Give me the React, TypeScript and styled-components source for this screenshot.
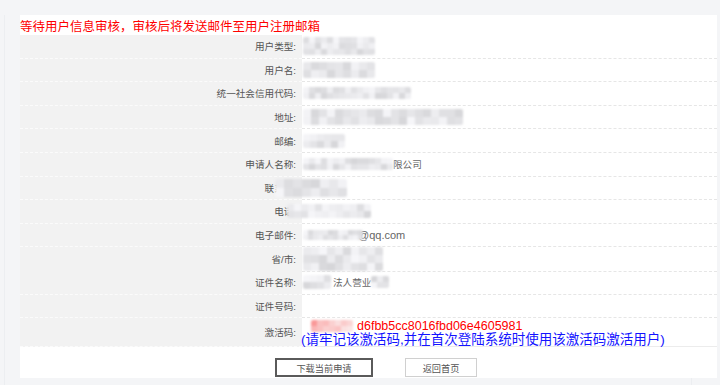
import React from 'react'
import styled, { createGlobalStyle } from 'styled-components'

const GlobalStyle = createGlobalStyle`
	html, body {
		margin: 0;
		padding: 0;
		background: #f4f5f7;
		font-family: "Liberation Sans", "Noto Sans CJK SC", sans-serif;
		overflow: hidden;
	}
`

const Page = styled.div`
	width: 720px;
	height: 385px;
	box-sizing: border-box;
	padding: 15px 0 0 4px;
	background: #f4f5f7;
`

// faint frame lines behind the panel (left edge and the one near the right)
const Frame = styled.div`
	width: 688px;
	height: 370px;
	box-sizing: border-box;
	border-left: 1px solid #eceef1;
	border-right: 1px solid #eceef1;
	padding-left: 15px;
`

const Panel = styled.div`
	width: 697px;
	height: 363px;
	background: #fff;
	display: flex;
	flex-direction: column;
`

const Notice = styled.div`
	height: 20px;
	display: flex;
	align-items: center;
	font-size: 12.5px;
	color: #ff0000;
	white-space: nowrap;
`

const Row = styled.div<{ $h?: number }>`
	display: grid;
	grid-template-columns: 282px 1fr;
	height: ${({ $h }) => $h ?? 23.6}px;
`

const Label = styled.div`
	box-sizing: border-box;
	background: #f2f2f2;
	border-bottom: 1px dashed #fbfbfb;
	display: flex;
	align-items: center;
	justify-content: flex-end;
	padding-right: 6px;
	font-size: 9.6px;
	color: #555;
	white-space: nowrap;
`

const Value = styled.div<{ $stack?: boolean; $last?: boolean }>`
	box-sizing: border-box;
	border-bottom: 1px ${({ $last }) => ($last ? 'solid #ececec' : 'dashed #e6e6e6')};
	display: flex;
	flex-direction: ${({ $stack }) => ($stack ? 'column' : 'row')};
	align-items: ${({ $stack }) => ($stack ? 'flex-start' : 'center')};
	padding-left: 1px;
	padding-top: ${({ $stack }) => ($stack ? 2 : 0)}px;
	font-size: 11px;
	color: #666;
	white-space: nowrap;
`

const Plain = styled.span<{ $size?: number; $shift?: number }>`
	font-size: ${({ $size }) => $size ?? 11}px;
	color: #666;
	margin-left: ${({ $shift }) => $shift ?? 0}px;
`

const Code = styled.div`
	display: flex;
	align-items: center;
	height: 12px;
	font-size: 12.5px;
	color: #ff0000;
`

const Hint = styled.div`
	height: 13px;
	line-height: 13px;
	margin-top: 1px;
	margin-left: -2px;
	font-size: 13.5px;
	color: #1414ff;
`

const MosaicGrid = styled.span<{ $cols: number; $cell: number; $shift: number; $after: number }>`
	display: inline-grid;
	grid-template-columns: repeat(${({ $cols }) => $cols}, ${({ $cell }) => $cell}px);
	grid-auto-rows: ${({ $cell }) => $cell}px;
	margin-left: ${({ $shift }) => $shift}px;
	margin-right: ${({ $after }) => $after}px;
	flex-shrink: 0;
	filter: blur(1px);
	border-radius: 2px;
	overflow: hidden;
`

const Footer = styled.div`
	flex: 1;
	display: flex;
	align-items: flex-end;
	gap: 32px;
	padding: 0 0 1px 255px;
`

const Button = styled.button<{ $primary?: boolean }>`
	height: 19px;
	width: ${({ $primary }) => ($primary ? 98 : 72)}px;
	box-sizing: border-box;
	background: #fff;
	border: ${({ $primary }) => ($primary ? '2px solid #5a5a5a' : '1px solid #d0d0d0')};
	padding: 0;
	font-family: "Liberation Sans", "Noto Sans CJK SC", sans-serif;
	font-size: 9.2px;
	color: #555;
	cursor: pointer;
`

type MosaicProps = { w: number; h: number; seed: number; cell?: number; red?: boolean; shift?: number; after?: number }

function Mosaic({ w, h, seed, cell = 6, red, shift = 0, after = 0 }: MosaicProps) {
	const cols = Math.ceil(w / cell)
	const rows = Math.ceil(h / cell)
	let s = seed * 9301 + 49297
	const rand = () => {
		s = (s * 9301 + 49297) % 233280
		return s / 233280
	}
	const cells = Array.from({ length: cols * rows }, () => {
		const t = rand()
		if (red) {
			const g = Math.round(150 + t * 90)
			return `rgb(250, ${g}, ${g})`
		}
		const v = Math.round(214 + t * 32)
		return `rgb(${v}, ${v}, ${Math.min(255, v + 3)})`
	})
	return (
		<MosaicGrid $cols={cols} $cell={cell} $shift={shift} $after={after}>
			{cells.map((c, i) => (
				<span key={i} style={{ background: c }} />
			))}
		</MosaicGrid>
	)
}

export default function App() {
	return (
		<>
			<GlobalStyle />
			<Page>
				<Frame>
					<Panel>
						<Notice>等待用户信息审核，审核后将发送邮件至用户注册邮箱</Notice>
						<Row>
							<Label>用户类型:</Label>
							<Value><Mosaic w={72} h={13} seed={3} /></Value>
						</Row>
						<Row>
							<Label>用户名:</Label>
							<Value><Mosaic w={72} h={16} seed={7} cell={8} /></Value>
						</Row>
						<Row>
							<Label>统一社会信用代码:</Label>
							<Value><Mosaic w={108} h={12} seed={11} /></Value>
						</Row>
						<Row>
							<Label>地址:</Label>
							<Value><Mosaic w={160} h={16} seed={17} cell={8} /></Value>
						</Row>
						<Row>
							<Label>邮编:</Label>
							<Value><Mosaic w={42} h={14} seed={23} cell={7} /></Value>
						</Row>
						<Row>
							<Label>申请人名称:</Label>
							<Value>
								<Mosaic w={90} h={8} seed={29} />
								<Plain $size={9.6}>限公司</Plain>
							</Value>
						</Row>
						<Row>
							<Label>联系人:</Label>
							<Value><Mosaic w={66} h={18} seed={31} cell={9} shift={-28} /></Value>
						</Row>
						<Row>
							<Label>电话:</Label>
							<Value><Mosaic w={80} h={14} seed={37} cell={7} shift={-16} /></Value>
						</Row>
						<Row>
							<Label>电子邮件:</Label>
							<Value>
								<Mosaic w={56} h={10} seed={41} cell={5} after={-5} />
								<Plain>@qq.com</Plain>
							</Value>
						</Row>
						<Row>
							<Label>省/市:</Label>
							<Value><Mosaic w={80} h={20} seed={43} cell={8} /></Value>
						</Row>
						<Row>
							<Label>证件名称:</Label>
							<Value>
								<Mosaic w={24} h={14} seed={47} cell={7} />
								<Plain $size={9.6} $shift={2}>法人营业</Plain>
								<Mosaic w={16} h={12} seed={53} />
							</Value>
						</Row>
						<Row>
							<Label>证件号码:</Label>
							<Value />
						</Row>
						<Row $h={25.5}>
							<Label>激活码:</Label>
							<Value $stack $last>
								<Code>
									<Mosaic w={42} h={12} seed={59} red shift={8} after={4} />
									d6fbb5cc8016fbd06e4605981
								</Code>
								<Hint>(请牢记该激活码,并在首次登陆系统时使用该激活码激活用户)</Hint>
							</Value>
						</Row>
						<Footer>
							<Button $primary>下载当前申请</Button>
							<Button>返回首页</Button>
						</Footer>
					</Panel>
				</Frame>
			</Page>
		</>
	)
}
